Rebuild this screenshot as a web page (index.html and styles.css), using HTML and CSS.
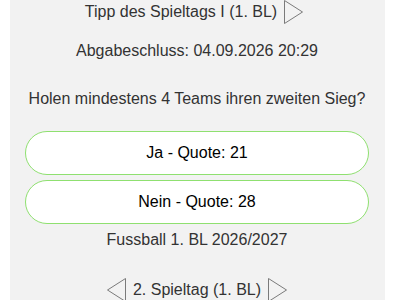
FILE: index.html
```html
<!DOCTYPE html>
<html lang="de">
<head>
<meta charset="utf-8">
<link rel="stylesheet" href="styles.css">
</head>
<body>
<div class="panel">
  <div class="nav nav-top">
    <span class="nav-title">Tipp des Spieltags I (1. BL)</span>
    <svg class="tri" width="19" height="24" viewBox="0 0 19 24"><polygon points="0.5,0.5 18.5,12 0.5,23.5" /></svg>
  </div>
  <p class="deadline">Abgabeschluss: 04.09.2026 20:29</p>
  <p class="question">Holen mindestens 4 Teams ihren zweiten Sieg?</p>
  <div class="answers">
    <button class="answer">Ja - Quote: 21</button>
    <button class="answer">Nein - Quote: 28</button>
  </div>
  <p class="league">Fussball 1. BL 2026/2027</p>
  <div class="nav nav-bottom">
    <svg class="tri" width="19" height="24" viewBox="0 0 19 24"><polygon points="18.5,0.5 0.5,12 18.5,23.5" /></svg>
    <span class="nav-title">2. Spieltag (1. BL)</span>
    <svg class="tri" width="19" height="24" viewBox="0 0 19 24"><polygon points="0.5,0.5 18.5,12 0.5,23.5" /></svg>
  </div>
</div>
</body>
</html>
```
FILE: styles.css
```css
html, body {
  margin: 0;
  padding: 0;
  background: #ffffff;
}
body {
  font-family: "Liberation Sans", Arial, Helvetica, sans-serif;
  font-size: 16px;
  line-height: 18px;
  color: #333333;
}
.panel {
  margin-left: 10px;
  width: 375px;
  min-height: 300px;
  box-sizing: border-box;
  padding: 0 16px 0 15px;
  background: #f2f2f2;
  text-align: center;
}
.nav {
  display: flex;
  justify-content: center;
  align-items: center;
  height: 24px;
  gap: 7px;
}
.nav-top {
  padding-right: 6px;
}
.tri {
  display: block;
  flex: none;
}
.tri polygon {
  fill: none;
  stroke: #7a7a7a;
  stroke-width: 1;
}
.deadline {
  margin: 18px 0 0;
}
.question {
  margin: 30px 0 0;
}
.answers {
  margin-top: 23px;
  display: flex;
  flex-direction: column;
  gap: 5px;
}
.answer {
  display: block;
  width: 100%;
  height: 44px;
  margin: 0;
  padding: 0;
  border: 1px solid #8fe070;
  border-radius: 22px;
  background: #ffffff;
  font-family: inherit;
  font-size: 16px;
  color: #000000;
}
.league {
  margin: 7px 0 0;
}
.nav-bottom {
  margin-top: 29px;
}
```
